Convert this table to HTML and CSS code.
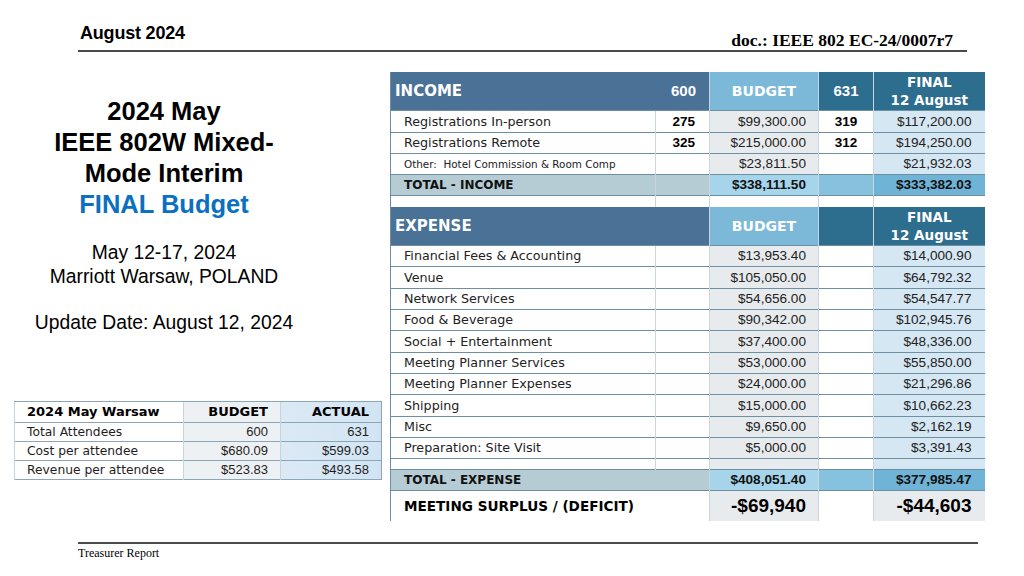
FILE: index.html
```html
<!DOCTYPE html>
<html>
<head>
<meta charset="utf-8">
<link rel="stylesheet" href="styles.css">
</head>
<body>
<div class="slide">
  <header class="top">
    <div class="date">August 2024</div>
    <div class="docid">doc.: IEEE 802 EC-24/0007r7</div>
  </header>

  <main class="main">
    <section class="left">
      <div class="title">
        <div>2024 May</div>
        <div>IEEE 802W Mixed-</div>
        <div>Mode Interim</div>
        <div class="blue">FINAL Budget</div>
      </div>
      <div class="where">
        <div>May 12-17, 2024</div>
        <div>Marriott Warsaw, POLAND</div>
      </div>
      <div class="update">Update Date: August 12, 2024</div>

      <table class="mini">
        <colgroup><col class="m1"><col class="m2"><col class="m3"></colgroup>
        <tr class="mh"><th class="ml">2024 May Warsaw</th><th class="mb">BUDGET</th><th class="ma">ACTUAL</th></tr>
        <tr><td class="ml">Total Attendees</td><td class="mb num">600</td><td class="ma num">631</td></tr>
        <tr><td class="ml">Cost per attendee</td><td class="mb num">$680.09</td><td class="ma num">$599.03</td></tr>
        <tr><td class="ml">Revenue per attendee</td><td class="mb num">$523.83</td><td class="ma num">$493.58</td></tr>
      </table>
    </section>

    <section class="right">
      <table class="budget">
        <colgroup><col class="c1"><col class="c2"><col class="c3"><col class="c4"><col class="c5"></colgroup>
        <tr class="hdr">
          <th class="h-lab">INCOME</th><th class="h-cnt">600</th><th class="h-bud">BUDGET</th><th class="h-act">631</th><th class="h-fin">FINAL<br>12 August</th>
        </tr>
        <tr class="row tall"><td class="lab">Registrations In-person</td><td class="cnt">275</td><td class="bud num">$99,300.00</td><td class="act">319</td><td class="fin num">$117,200.00</td></tr>
        <tr class="row"><td class="lab">Registrations Remote</td><td class="cnt">325</td><td class="bud num">$215,000.00</td><td class="act">312</td><td class="fin num">$194,250.00</td></tr>
        <tr class="row"><td class="lab small">Other:&nbsp; Hotel Commission &amp; Room Comp</td><td class="cnt"></td><td class="bud num">$23,811.50</td><td class="act"></td><td class="fin num">$21,932.03</td></tr>
        <tr class="total"><td class="lab">TOTAL - INCOME</td><td class="cnt"></td><td class="bud num">$338,111.50</td><td class="act"></td><td class="fin num">$333,382.03</td></tr>
        <tr class="gap"><td class="lab"></td><td class="cnt"></td><td class="bud w"></td><td class="act"></td><td class="fin w"></td></tr>
        <tr class="hdr">
          <th class="h-lab" colspan="2">EXPENSE</th><th class="h-bud">BUDGET</th><th class="h-act"></th><th class="h-fin">FINAL<br>12 August</th>
        </tr>
        <tr class="row"><td class="lab">Financial Fees &amp; Accounting</td><td class="cnt"></td><td class="bud num">$13,953.40</td><td class="act"></td><td class="fin num">$14,000.90</td></tr>
        <tr class="row tall"><td class="lab">Venue</td><td class="cnt"></td><td class="bud num">$105,050.00</td><td class="act"></td><td class="fin num">$64,792.32</td></tr>
        <tr class="row"><td class="lab">Network Services</td><td class="cnt"></td><td class="bud num">$54,656.00</td><td class="act"></td><td class="fin num">$54,547.77</td></tr>
        <tr class="row"><td class="lab">Food &amp; Beverage</td><td class="cnt"></td><td class="bud num">$90,342.00</td><td class="act"></td><td class="fin num">$102,945.76</td></tr>
        <tr class="row tall"><td class="lab">Social + Entertainment</td><td class="cnt"></td><td class="bud num">$37,400.00</td><td class="act"></td><td class="fin num">$48,336.00</td></tr>
        <tr class="row"><td class="lab">Meeting Planner Services</td><td class="cnt"></td><td class="bud num">$53,000.00</td><td class="act"></td><td class="fin num">$55,850.00</td></tr>
        <tr class="row"><td class="lab">Meeting Planner Expenses</td><td class="cnt"></td><td class="bud num">$24,000.00</td><td class="act"></td><td class="fin num">$21,296.86</td></tr>
        <tr class="row tall"><td class="lab">Shipping</td><td class="cnt"></td><td class="bud num">$15,000.00</td><td class="act"></td><td class="fin num">$10,662.23</td></tr>
        <tr class="row"><td class="lab">Misc</td><td class="cnt"></td><td class="bud num">$9,650.00</td><td class="act"></td><td class="fin num">$2,162.19</td></tr>
        <tr class="row"><td class="lab">Preparation: Site Visit</td><td class="cnt"></td><td class="bud num">$5,000.00</td><td class="act"></td><td class="fin num">$3,391.43</td></tr>
        <tr class="gap2"><td class="lab"></td><td class="cnt"></td><td class="bud"></td><td class="act"></td><td class="fin"></td></tr>
        <tr class="total"><td class="lab" colspan="2">TOTAL - EXPENSE</td><td class="bud num">$408,051.40</td><td class="act"></td><td class="fin num">$377,985.47</td></tr>
        <tr class="surplus"><td class="lab" colspan="2">MEETING SURPLUS / (DEFICIT)</td><td class="bud num">-$69,940</td><td class="act"></td><td class="fin num">-$44,603</td></tr>
      </table>
    </section>
  </main>

  <footer class="foot">Treasurer Report</footer>
</div>
</body>
</html>
```

FILE: styles.css
```css
html, body { margin: 0; padding: 0; background: #fff; }
.slide { width: 1024px; height: 576px; overflow: hidden; background: #fff; }

.top {
  height: 52px;
  margin: 0 57px 0 78px;
  border-bottom: 2px solid #4a4a4a;
  display: flex;
  justify-content: space-between;
  align-items: flex-end;
  box-sizing: border-box;
}
.date {
  font-family: "Liberation Sans", Arial, sans-serif;
  font-weight: bold;
  font-size: 18px;
  padding: 0 0 6px 2px;
  letter-spacing: -0.2px;
}
.docid {
  font-family: "Liberation Serif", "Times New Roman", serif;
  font-weight: bold;
  font-size: 17.5px;
  line-height: 20px;
  margin-right: 14px;
}

.main { display: flex; height: 490px; }
.left { width: 390px; flex: none; padding-top: 44px; box-sizing: border-box; }
.right { padding-top: 20px; }

.title {
  width: 328px;
  text-align: center;
  font-family: "Liberation Sans", Arial, sans-serif;
  font-weight: bold;
  font-size: 25.5px;
  line-height: 31px;
  color: #000;
}
.title .blue { color: #0a70bf; }
.where {
  width: 328px;
  margin-top: 21px;
  text-align: center;
  font-family: "Liberation Sans", Arial, sans-serif;
  font-size: 19.3px;
  line-height: 24px;
}
.update {
  width: 328px;
  margin-top: 22px;
  text-align: center;
  font-family: "Liberation Sans", Arial, sans-serif;
  font-size: 19.3px;
  line-height: 24px;
}

/* mini table */
.mini {
  margin: 66px 0 0 14px;
  border-collapse: collapse;
  table-layout: fixed;
  width: 367px;
  font-family: "DejaVu Sans", sans-serif;
  font-size: 12.3px;
  color: #1e1e1e;
  border: 1px solid #8ba6b6;
}
.mini col.m1 { width: 169px; }
.mini col.m2 { width: 97px; }
.mini col.m3 { width: 101px; }
.mini th, .mini td {
  height: 18px;
  padding: 0;
  border-top: 1px solid #8ba6b6;
  border-left: 1px solid #c9d5dc;
  line-height: 18px;
}
.mini .mh th { height: 20px; font-weight: bold; font-size: 13px; color: #000; }
.mini .ml { text-align: left; padding-left: 12px; background: #fff; }
.mini .mb { text-align: right; padding-right: 12px; background: #eef1f3; }
.mini .ma { text-align: right; padding-right: 12px; background: linear-gradient(90deg, #dbe9f5, #d2e4f3); }
.mini .num { font-family: "Liberation Sans", Arial, sans-serif; font-size: 13px; }

/* budget table */
.budget {
  border-collapse: collapse;
  table-layout: fixed;
  width: 594px;
  font-family: "DejaVu Sans", sans-serif;
  font-size: 12.7px;
  color: #222;
  border-left: 1px solid #6e8fa2;
}
.budget col.c1 { width: 265px; }
.budget col.c2 { width: 54px; }
.budget col.c3 { width: 109px; }
.budget col.c4 { width: 55px; }
.budget col.c5 { width: 111px; }
.budget td, .budget th { padding: 0; white-space: nowrap; overflow: hidden; }

.hdr th {
  height: 38px;
  color: #fff;
  font-weight: bold;
  font-size: 14px;
  line-height: 18px;
}
.hdr .h-lab { background: #4a7196; text-align: left; padding-left: 4px; font-size: 15px; }
.hdr .h-cnt { background: #4a7196; text-align: right; padding-right: 13px; font-family: "Liberation Sans", Arial, sans-serif; font-size: 15px; }
.hdr .h-bud { background: #7cb9d8; text-align: center; border-left: 1px solid #c5d6e0; }
.hdr .h-act { background: #2d6d8d; text-align: center; border-left: 1px solid #c5d6e0; font-family: "Liberation Sans", Arial, sans-serif; font-size: 15px; }
.hdr .h-fin { background: #2d6d8d; text-align: center; border-left: 1px solid #c5d6e0; font-size: 13.5px; }

.row td, .total td, .gap td, .gap2 td, .surplus td {
  border-top: 1px solid #6d8fa2;
}
.row td { height: 20px; line-height: 20px; }
.row.tall td { height: 21px; }
.budget .lab { text-align: left; padding-left: 13px; background: #fff; }
.budget .lab.small { font-size: 10.4px; }
.budget .cnt {
  background: #fff; border-left: 1px solid #cbd5dc; text-align: right; padding-right: 14px;
  font-family: "Liberation Sans", Arial, sans-serif; font-weight: bold; font-size: 13.5px; color: #000;
}
.budget .bud { background: #e8ebee; border-left: 1px solid #cbd5dc; text-align: right; padding-right: 12px; }
.budget .act {
  background: #fff; border-left: 1px solid #cbd5dc; text-align: center;
  font-family: "Liberation Sans", Arial, sans-serif; font-weight: bold; font-size: 13.5px; color: #000;
}
.budget .fin { background: #d6e7f4; border-left: 1px solid #cbd5dc; text-align: right; padding-right: 13px; }
.budget .num { font-family: "Liberation Sans", Arial, sans-serif; font-size: 13.6px; color: #222; }

.total td { height: 20px; line-height: 20px; font-weight: bold; color: #111; }
.total .lab { background: #b6ccd5; font-size: 12px; }
.total .cnt { background: #b6ccd5; }
.total .bud { background: #a6d4ea; }
.total .act { background: #86c1dd; }
.total .fin { background: #6fb3d6; }
.total .num { font-size: 13.6px; font-weight: bold; color: #111; }

.gap td { height: 11px; }
.gap .w { background: #fff; }
.gap2 td { height: 10px; }

.surplus td { height: 30px; }
.surplus .lab { font-weight: bold; font-size: 13.6px; color: #000; }
.surplus .num { font-weight: bold; font-size: 19px; color: #000; }
.surplus .fin { background: #e8ebee; }

.foot {
  margin: 0 46px 0 78px;
  border-top: 2px solid #4a4a4a;
  padding-top: 2px;
  font-family: "Liberation Serif", "Times New Roman", serif;
  font-size: 12px;
  line-height: 14px;
}
```
